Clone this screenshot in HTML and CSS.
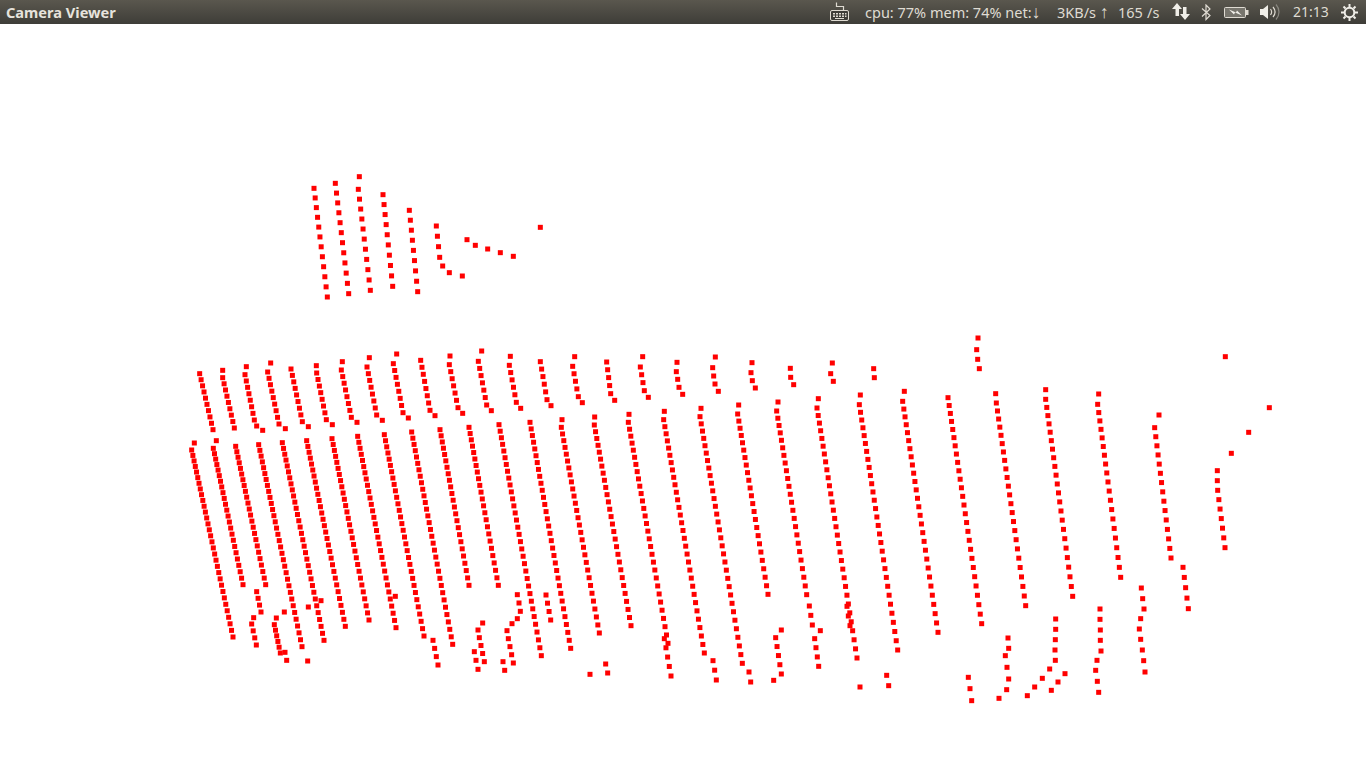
FILE: index.html
```html
<!DOCTYPE html>
<html lang="en">
<head>
<meta charset="utf-8">
<title>Camera Viewer</title>
<link rel="stylesheet" href="styles.css">
</head>
<body>
<header class="panel">
  <div class="app-title">Camera Viewer</div>
  <div class="indicators">
    <svg class="icon icon-keyboard" width="20" height="20" viewBox="0 0 20 20">
      <path class="line" d="M6.5 1.5v4h7v4"/>
      <rect class="kb-body" x="0.5" y="9.5" width="18" height="10" rx="1.5"/>
      <path class="kb-keys" d="M3 12h2v1.5H3zM6 12h2v1.5H6zM9 12h2v1.5H9zM12 12h2v1.5h-2zM15 12h1.500v1.500H15zM3 14.500h2V16H3zM6 14.500h2V16H6zM9 14.500h2V16H9zM12 14.500h2V16h-2zM15 14.500h1.500V16H15zM5 17h9v1H5z"/>
    </svg>
    <span class="stat stat-main">cpu: 77% mem: 74% net:<span class="arrow">↓</span></span>
    <span class="stat stat-down">3KB/s <span class="arrow">↑</span></span>
    <span class="stat stat-up">165</span>
    <span class="stat stat-rate">/s</span>
    <svg class="icon icon-network" width="18" height="18" viewBox="0 0 18 18">
      <path class="solid" d="M5 0l5 6H7v7H3.500V6H0zM13 17l-5-6h3V4h3.500v7H18z"/>
    </svg>
    <svg class="icon icon-bt" width="10" height="17" viewBox="0 0 10 17">
      <path class="line" d="M1 4.500l8 7L5 15.500V1l4 4L1 12.500"/>
    </svg>
    <svg class="icon icon-battery" width="25" height="11" viewBox="0 0 25 11">
      <rect class="bat-body" x="0.500" y="0.500" width="21" height="10" rx="1"/>
      <rect class="bat-tip" x="22" y="3" width="2.500" height="5"/>
      <path class="bat-bolt" d="M5 2.500l7 3 1-2 5 5-7-3-1 2z"/>
    </svg>
    <svg class="icon icon-volume" width="20" height="18" viewBox="0 0 20 18">
      <path class="solid" d="M0 6h3l5-4v14l-5-4H0z"/>
      <path class="line" d="M10.500 6c1.500 2 1.500 4 0 6M13 4c2.500 3 2.500 7 0 10"/>
      <path class="line-dim" d="M16 1.500c4 4.500 4 10.500 0 15"/>
    </svg>
    <span class="stat stat-time">21:13</span>
    <svg class="icon icon-gear" width="17" height="17" viewBox="0 0 17 17">
      <circle class="gear-ring" cx="8.500" cy="8.500" r="4.800"/>
      <path class="gear-teeth" d="M8.500 0v3M8.500 14v3M0 8.500h3M14 8.500h3M2.500 2.500l2 2M14.500 2.500l-2 2M2.500 14.500l2-2M14.500 14.500l-2-2"/>
    </svg>
  </div>
</header>
<main class="viewer">
  <svg id="cloud" class="cloud" width="1366" height="744" viewBox="0 24 1366 744"></svg>
</main>
<script src="points.js"></script>
</body>
</html>
```
FILE: styles.css
```css
* { box-sizing: border-box; }
html, body { margin: 0; padding: 0; background: #fff; overflow: hidden; }
body { width: 1366px; height: 768px; font-family: "Noto Sans", "Open Sans", sans-serif; }

.panel {
  display: flex;
  align-items: center;
  height: 24px;
  padding-left: 6px;
  background: linear-gradient(#5a574e, #3e3d38);
  color: #dfdbd2;
  font-size: 14.5px;
  white-space: nowrap;
}
.app-title { font-weight: 700; width: 120px; font-size: 14.6px; color: #e6e3dc; }
.indicators { display: flex; align-items: center; margin-left: auto; height: 24px; }

.stat { display: block; line-height: 24px; }
.stat-main { width: 174px; margin-left: 15px; }
.stat-down { width: 54px; margin-left: 18px; }
.stat-up { width: 24px; margin-left: 7px; }
.stat-rate { width: 14px; margin-left: 5px; }
.stat-time { width: 36px; margin-left: 13px; font-size: 14px; }
.arrow { font-family: "Liberation Sans", sans-serif; font-size: 18px; line-height: 1; }

.icon { display: block; flex: none; }
.icon-keyboard { margin-bottom: 2px; }
.icon-network { margin-left: 11px; }
.icon-bt { margin-left: 11px; }
.icon-battery { margin-left: 13px; }
.icon-volume { margin-left: 11px; }
.icon-gear { margin-left: 12px; margin-right: 8px; }

.line { fill: none; stroke: #dfdbd2; stroke-width: 1.2; }
.line-dim { fill: none; stroke: #8a8880; stroke-width: 1.2; }
.solid { fill: #f0eee8; }
.kb-body { fill: #3e3d38; stroke: #dfdbd2; stroke-width: 1; }
.kb-keys { fill: #dfdbd2; }
.bat-body { fill: #77756d; stroke: #dfdbd2; stroke-width: 1; }
.bat-tip { fill: #dfdbd2; }
.bat-bolt { fill: #f0eee8; }
.gear-ring { fill: none; stroke: #f0eee8; stroke-width: 2; }
.gear-teeth { fill: none; stroke: #f0eee8; stroke-width: 2; }

.viewer { display: block; height: 744px; background: #fff; }
.cloud { display: block; }
.cloud rect { fill: #f00; }
```
FILE: points.js
```js
// Point cloud data. Each block uses its own origin; coordinates are at 3x scale.
// Arrays with 5 items are runs [x0, y0, x1, y1, n]; arrays with 2 items are single points.
var blocks = [
  { o: [300, 165], d: [
    [42,70,82,396,12],[106,55,146,386,12],[178,35],[175,73,211,376,11],
    [249,89,278,364,10],[328,136,353,380,9],[409,183,419,277,4],[428,303],[448,323],[487,333],
    [721,187],[501,224],[526,241],[563,252],[601,263],[640,274]
  ]},
  { o: [180, 340], d: [
    [59,101,99,269,10],[128,91],[128,113,163,264,9],
    [199,80],[195,104,223,240,8],[230,258],[248,271],
    [272,69],[263,96,297,252,9],[316,266],
    [333,87,367,245,9],[385,260],
    [409,77],[410,99,439,239,8],[457,254],
    [487,65],[484,90,514,232,8],[531,247],
    [568,53],[561,81,590,225,8],[607,241],
    [650,42],[640,71,669,218,8],[685,234],
    [722,61,750,211,8],[765,227],
    [810,48],[808,74,834,203,7],[848,220],
    [43,309],[35,330,159,891,32],
    [109,302],[100,325,189,734,24],
    [167,319,257,734,24],
    [236,314,366,920,33],
    [307,308,432,901,32],
    [380,302,496,859,30],
    [456,296,567,840,29],
    [533,289,648,863,30],
    [613,284,732,888,31],
    [695,276,818,913,32],
    [780,269,867,736,24],
    [759,901,774,975,4],
    [230,755,243,816,4],
    [221,833],[215,852,229,915,4],
    [289,834],[283,854,301,939,5+1],[315,937],[320,961],
    [313,816],[383,963],[385,801],[423,782],[646,769]
  ]},
  { o: [460, 340], d: [
    [65,33],[55,64,80,195,7],[94,212],
    [151,49],[148,76,169,187,6],[182,205],
    [241,65,261,179,6],[273,197],
    [344,50],[338,79,355,170,5],[367,188],
    [440,66,452,161,5],[464,181],
    [548,50],[541,81,553,152,4],[565,172],
    [651,67],[649,95],[653,118],[657,142],[668,163],
    [766,51],[758,83],[761,108],[765,132],[775,154],
    [876,68],[873,98],[877,122],[886,144],
    [27,262,115,736,24],
    [117,254,244,947,33],
    [210,247,332,925,32],
    [306,239],[304,262,418,879,29],
    [404,231],[403,255,513,857,28],
    [507,223],[505,247,624,910,30],
    [613,214],[611,239,733,939,31],
    [723,205],[720,230,847,970,32],
    [836,195]
  ]},
  { o: [740, 330], d: [
    [-7,252,84,793,24],
    [151,115],[152,142],[161,164],
    [277,99],[272,131],[280,154],
    [401,116],[403,143],
    [714,24],[710,59],[713,88],[718,116],
    [114,216],[110,243,200,794,24],
    [235,206],[231,234,351,984,31],[321,829],[325,858],[330,887],
    [361,195],[358,224,473,960,30],
    [493,184],[488,214,594,907,28],
    [624,203,725,881,27],
    [767,191],[769,219,857,827,24]
  ]},
  { o: [1000, 340], d: [
    [137,149],[137,178,218,769,23],
    [296,162],[293,193,362,712,20],
    [477,225],[464,263,513,654,15],
    [549,682,565,806,5],
    [652,392],[652,422],[653,451,675,623,7],
    [676,50],[808,203],[746,277],[694,340]
  ]},
  { o: [420, 580], d: [
    [188,129],[174,150],[178,173,193,245,4],[163,215],[168,241],[174,268],
    [292,44],[297,69],[301,94],[292,116],[276,131],[261,152],[265,176,280,249,4],[249,245],[254,271],
    [378,45,392,120,4],
    [557,252],[563,279],[510,283],
    [733,176,753,288,5],
    [879,242,889,300,3]
  ]},
  { o: [720, 580], d: [
    [184,150],[167,173,184,282,5],[161,301],
    [87,276],[92,306],
    [268,78,277,135,3],[301,152],[284,176,296,259,4],
    [420,321],[500,286],[506,317]
  ]},
  { o: [960, 560], d: [
    [144,234],[146,265],[136,287],[141,322],[146,357],[140,389],[117,415],
    [25,352],[30,386],[35,422],
    [287,177],[287,208],[286,239],[285,270],[286,301],[269,327],[247,355],[224,381],[202,407],
    [315,341],[294,366],[274,391],
    [420,147],[420,178],[421,210],[421,241],[423,273],[411,301],[407,331],[412,364],[416,397],
    [544,84],[548,116],[552,147],[542,176],[538,207],[542,238],[547,270],[551,302],[555,336]
  ]}
];

var svg = document.getElementById("cloud");
var NS = "http://www.w3.org/2000/svg";
var SIZE = 5;

function dot(x, y) {
  var r = document.createElementNS(NS, "rect");
  r.setAttribute("x", (x - SIZE / 2).toFixed(2));
  r.setAttribute("y", (y - SIZE / 2).toFixed(2));
  r.setAttribute("width", SIZE);
  r.setAttribute("height", SIZE);
  svg.appendChild(r);
}

blocks.forEach(function (b) {
  b.d.forEach(function (p) {
    if (p.length === 2) {
      dot(b.o[0] + p[0] / 3, b.o[1] + p[1] / 3);
      return;
    }
    var n = p[4];
    var curve = n > 15 ? 0.1 : 0.03; // scan lines spread slightly toward the bottom
    for (var i = 0; i < n; i++) {
      var t = n > 1 ? i / (n - 1) : 0;
      var s = (1 - curve) * t + curve * t * t;
      dot(b.o[0] + (p[0] + (p[2] - p[0]) * s) / 3, b.o[1] + (p[1] + (p[3] - p[1]) * s) / 3);
    }
  });
});
```
